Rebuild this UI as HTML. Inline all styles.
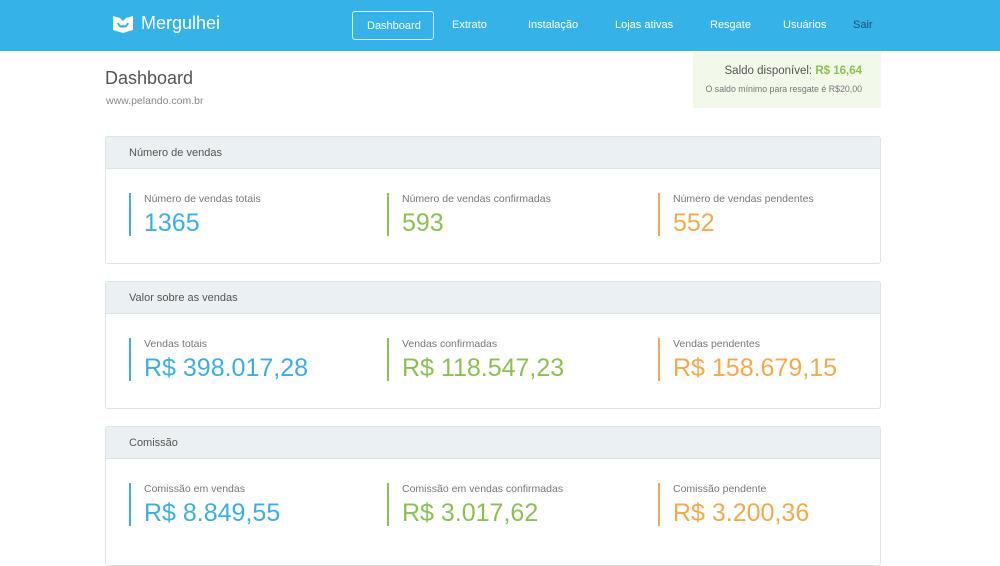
<!DOCTYPE html><html><head><style>
*{margin:0;padding:0;box-sizing:border-box}
body{width:1000px;height:549px;overflow:hidden;background:#fff;font-family:"Liberation Sans",sans-serif;color:#666;position:relative}
.hdr{position:absolute;left:0;top:0;width:1000px;height:51px;background:#35b3e9}
.logo{position:absolute;left:112px;top:13px;color:#fff;font-size:18px;display:flex;align-items:center;gap:7px}
.nav a{position:absolute;top:11px;height:29px;line-height:29px;color:#fff;font-size:11px;text-decoration:none;white-space:nowrap}
.nav a.act{border:1px solid rgba(255,255,255,.8);border-radius:3px;padding:0 0 0 14px;left:352px;width:82px}
.t{position:absolute;left:105px;top:68px;font-size:18px;color:#555}
.s{position:absolute;left:106px;top:95px;font-size:10.5px;color:#888}
.saldo{position:absolute;left:693px;top:52px;width:188px;height:56px;background:#f2f8ea;text-align:right;padding:13px 19px 0 0;white-space:nowrap}
.saldo .a{font-size:11.5px;color:#555}.saldo .a b{color:#8cc152}
.saldo .b{font-size:8.8px;color:#777;margin-top:7px}
.p{position:absolute;left:105px;width:776px;height:128px;border:1px solid #dde3e6;border-radius:3px;overflow:hidden}
.p .h{height:32px;background:#ebf0f2;border-bottom:1px solid #dde3e6;font-size:11px;color:#555;padding:10px 0 0 23px}
.c{position:absolute;top:56px;height:43px;border-left:2px solid;padding-left:13px;white-space:nowrap}
.c .l{font-size:10.5px;color:#777;margin-top:0}
.c .n{font-size:25px;margin-top:4px}
.b1{border-color:#3bafe3;left:23px}.b1 .n{color:#3bafe3}
.b2{border-color:#8cc152;left:281px}.b2 .n{color:#8cc152}
.b3{border-color:#f5a94a;left:552px}.b3 .n{color:#f5a94a}
</style></head><body>
<div class="hdr">
<div class="logo"><svg width="22" height="20" viewBox="0 0 22 20"><path d="M1 2 L8 4 L11 7 L14 4 L21 2 L21 16 L11 19 L1 16Z" fill="#fff"/><path d="M6 9 Q8 14 11 12 Q14 14 16 9" stroke="#35b3e9" stroke-width="2" fill="none"/></svg>Mergulhei</div>
<div class="nav"><a class="act">Dashboard</a><a style="left:452px">Extrato</a><a style="left:528px">Instalação</a><a style="left:615px">Lojas ativas</a><a style="left:710px">Resgate</a><a style="left:783px">Usuários</a><a style="left:853px;color:#1d4f7a">Sair</a></div>
</div>
<div class="t">Dashboard</div><div class="s">www.pelando.com.br</div>
<div class="saldo"><div class="a">Saldo disponível: <b>R$ 16,64</b></div><div class="b">O saldo mínimo para resgate é R$20,00</div></div>
<div class="p" style="top:136px"><div class="h">Número de vendas</div>
<div class="c b1"><div class="l">Número de vendas totais</div><div class="n">1365</div></div>
<div class="c b2"><div class="l">Número de vendas confirmadas</div><div class="n">593</div></div>
<div class="c b3"><div class="l">Número de vendas pendentes</div><div class="n">552</div></div></div>
<div class="p" style="top:281px"><div class="h">Valor sobre as vendas</div>
<div class="c b1"><div class="l">Vendas totais</div><div class="n">R$ 398.017,28</div></div>
<div class="c b2"><div class="l">Vendas confirmadas</div><div class="n">R$ 118.547,23</div></div>
<div class="c b3"><div class="l">Vendas pendentes</div><div class="n">R$ 158.679,15</div></div></div>
<div class="p" style="top:426px;height:140px"><div class="h">Comissão</div>
<div class="c b1"><div class="l">Comissão em vendas</div><div class="n">R$ 8.849,55</div></div>
<div class="c b2"><div class="l">Comissão em vendas confirmadas</div><div class="n">R$ 3.017,62</div></div>
<div class="c b3"><div class="l">Comissão pendente</div><div class="n">R$ 3.200,36</div></div></div>
</body></html>
